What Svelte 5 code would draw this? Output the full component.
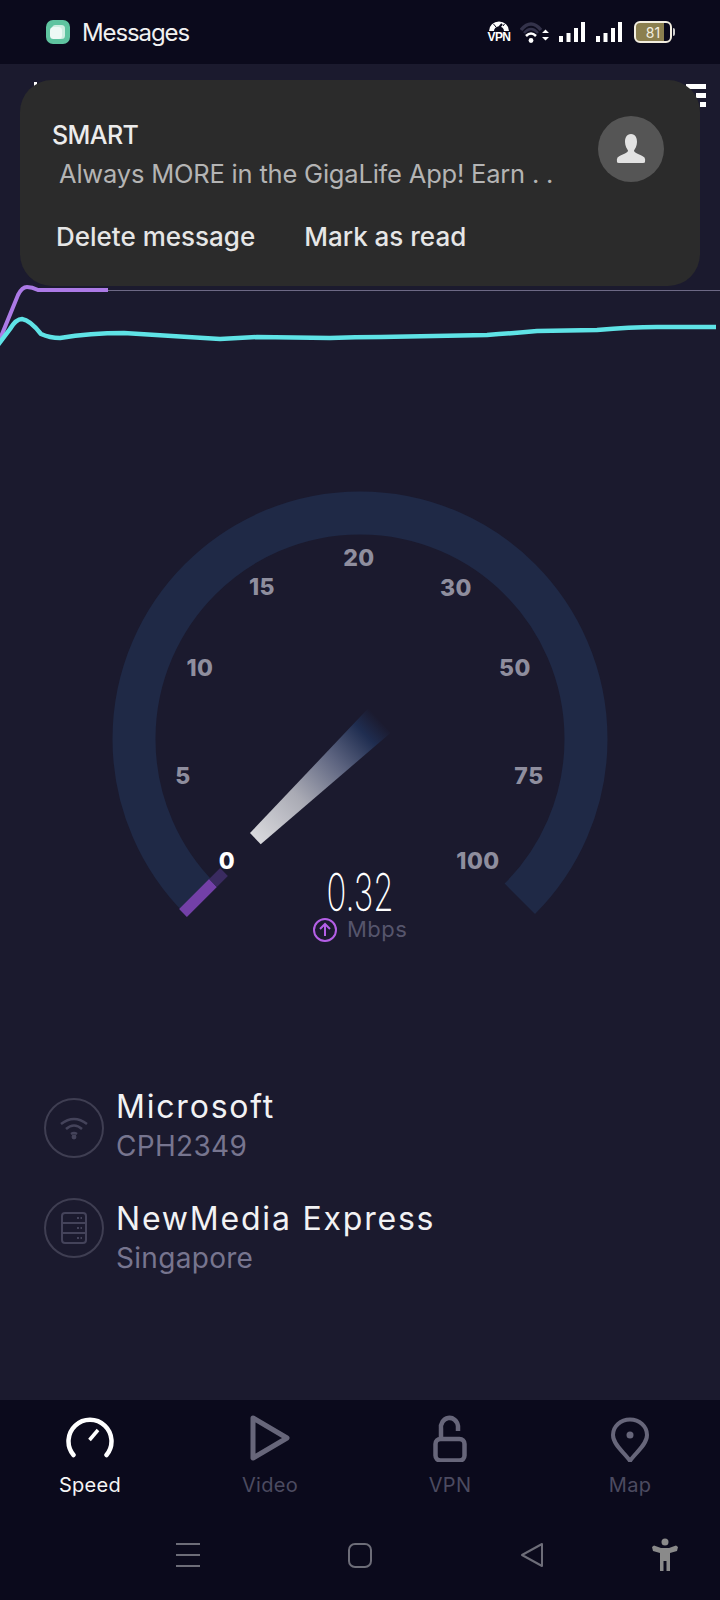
<script>
  const ticks = [
    { label: "20", x: 359, y: 566 },
    { label: "15", x: 262, y: 595 },
    { label: "30", x: 456, y: 596 },
    { label: "10", x: 200, y: 676 },
    { label: "50", x: 515, y: 676 },
    { label: "5", x: 183, y: 784 },
    { label: "75", x: 529, y: 784 },
    { label: "100", x: 478, y: 869 }
  ];

  const cyanLine =
    "M-2 345 L10 329 Q16 319 22 319 Q30 320 41 334 Q50 338 60 338 Q90 333 124 333 Q170 336 220 339 Q240 338 257 337 L330 338 Q355 337 381 337 L487 335 Q515 333 537 331 L597 330 Q630 327 657 327 L716 327";
</script>

<div class="phone">
  <header class="status">
    <div class="status-left">
      <svg class="app-icon" viewBox="0 0 24 24">
        <rect x="0" y="0" width="24" height="24" rx="7" fill="#5fc4a0" />
        <rect x="6" y="5" width="13" height="14" rx="3.5" fill="#cfeee2" />
        <rect x="4" y="7" width="12" height="12" rx="3.5" fill="#eef9f5" />
      </svg>
      <span>Messages</span>
    </div>
    <div class="status-right">
      <div class="vpn">
        <svg width="22" height="11" viewBox="0 0 22 11">
          <path d="M1 10 A10 9.500 0 0 1 21 10 L16 10 A5 4.500 0 0 0 6 10 Z" fill="#fff" />
          <path d="M9 9 L14 3" stroke="#0b0a1c" stroke-width="2" />
          <path d="M5.500 3 L8 6 M16.500 3 L15 5" stroke="#0b0a1c" stroke-width="1" />
        </svg>
        <span>VPN</span>
      </div>
      <svg class="wifi" width="30" height="21" viewBox="0 0 30 21">
        <path d="M1 8 Q11 -4 21 8" fill="none" stroke="#33324a" stroke-width="3.500" />
        <path d="M4 11 Q11 3 18 11" fill="none" stroke="#33324a" stroke-width="2.500" />
        <path d="M6 14 Q11 9 16 14" fill="none" stroke="#fff" stroke-width="2.500" />
        <circle cx="11" cy="18.500" r="2.400" fill="#fff" />
        <path d="M22 11 L25.500 7.500 L29 11 Z M22 15 L25.500 18.500 L29 15 Z" fill="#fff" />
      </svg>
      <svg class="signal" width="26" height="20" viewBox="0 0 26 20">
        <rect x="0" y="14" width="4" height="6" />
        <rect x="7.500" y="11" width="4" height="9" />
        <rect x="15" y="6" width="4" height="14" />
        <rect x="22" y="0" width="4" height="20" />
      </svg>
      <svg class="signal" width="26" height="20" viewBox="0 0 26 20">
        <rect x="0" y="14" width="4" height="6" />
        <rect x="7.500" y="11" width="4" height="9" />
        <rect x="15" y="6" width="4" height="14" />
        <rect x="22" y="0" width="4" height="20" />
      </svg>
      <div class="battery">
        <div class="battery-body"><span>81</span></div>
        <div class="battery-cap"></div>
      </div>
    </div>
  </header>

  <main class="content">
    <!-- bits of the app header poking out behind the notification -->
    <span class="peek-dot"></span>
    <div class="peek-menu"><i></i><i></i><i></i></div>

    <section class="notification">
      <div class="note-text">
        <div class="sender">SMART</div>
        <div class="preview">Always MORE in the GigaLife App! Earn . .</div>
      </div>
      <div class="avatar">
        <svg viewBox="0 0 32 32" width="32" height="32">
          <path d="M16 1 C11.500 1 10 5 10 9 C10 13 12 16 13 17.500 C13 20.500 7 21 2.500 24.500 Q1.500 26 2 29 Q2 30 4 30 L28 30 Q30 30 30 29 Q30.500 26 29.500 24.500 C25 21 19 20.500 19 17.500 C20 16 22 13 22 9 C22 5 20.500 1 16 1 Z" fill="#e2e2e2" />
        </svg>
      </div>
      <div class="actions">
        <span>Delete message</span>
        <span>Mark as read</span>
      </div>
    </section>

    <svg class="chart" viewBox="0 280 720 80" width="720" height="80">
      <line x1="108" y1="290.500" x2="720" y2="290.500" stroke="#6d6985" stroke-width="1" />
      <path d="M-2 344 L18 295 Q22 287 27 287 Q32 287 38 290 L108 290" fill="none" stroke="#ac7ae6" stroke-width="4" />
      <path d={cyanLine} fill="none" stroke="#5fe3e6" stroke-width="4.500" />
    </svg>

    <svg class="gauge" viewBox="0 480 720 480" width="720" height="480">
      <defs>
        <linearGradient id="needle" gradientUnits="userSpaceOnUse" x1="255" y1="839" x2="380" y2="720">
          <stop offset="0" stop-color="#d9d9dd" />
          <stop offset="0.35" stop-color="#a9aab4" />
          <stop offset="0.65" stop-color="#5d6480" />
          <stop offset="0.88" stop-color="#1f2d50" />
          <stop offset="1" stop-color="#1b1a2e" />
        </linearGradient>
      </defs>
      <path d="M200.200 898.800 A226 226 0 1 1 519.800 898.800" fill="none" stroke="#1f2946" stroke-width="43" />
      <path d="M183 913 L213 883" stroke="#7340a8" stroke-width="11" />
      <path d="M213 883 L224 872" stroke="#3a2b60" stroke-width="11" />
      <polygon points="250,833 260.700,844.300 390.700,732.700 368.300,708.300" fill="url(#needle)" />
      {#each ticks as tick}
        <text class="tick" x={tick.x} y={tick.y}>{tick.label}</text>
      {/each}
      <text class="tick zero" x="227" y="869">0</text>
      <text class="speed" x="360" y="911" textLength="67" lengthAdjust="spacingAndGlyphs">0.32</text>
      <circle cx="325" cy="930" r="11" fill="none" stroke="#b45fe6" stroke-width="2" />
      <path d="M325 936 L325 924 M320 929 L325 924 L330 929" fill="none" stroke="#b45fe6" stroke-width="2" />
      <text class="unit" x="347" y="937">Mbps</text>
    </svg>

    <section class="servers">
      <div class="server">
        <div class="round">
          <svg viewBox="0 0 30 24" width="30" height="24" fill="none" stroke="#44435a" stroke-width="2.500">
            <path d="M2 8 Q15 -2 28 8" />
            <path d="M7 13 Q15 6 23 13" />
            <path d="M12 18 Q15 16 18 18" />
            <circle cx="15" cy="21" r="1.200" fill="#44435a" />
          </svg>
        </div>
        <div>
          <div class="name">Microsoft</div>
          <div class="sub">CPH2349</div>
        </div>
      </div>
      <div class="server isp">
        <div class="round">
          <svg viewBox="0 0 26 32" width="26" height="32" fill="none" stroke="#44435a" stroke-width="2">
            <rect x="1" y="1" width="24" height="30" rx="3" />
            <path d="M1 11 H25 M1 21 H25" />
            <path d="M16 6 H21 M16 16 H21 M16 26 H21" stroke-dasharray="2 1.500" />
          </svg>
        </div>
        <div>
          <div class="name">NewMedia Express</div>
          <div class="sub">Singapore</div>
        </div>
      </div>
    </section>
  </main>

  <nav class="tabs">
    <div class="tab active">
      <svg viewBox="0 1 48 42" width="48" height="42" fill="none" stroke="#fff" stroke-width="4.500" stroke-linecap="round">
        <path d="M7.500 39 A21.500 21.500 0 1 1 40.500 39" />
        <path d="M23.500 24 L32 14" stroke-width="3.500" stroke-linecap="butt" />
      </svg>
      <span>Speed</span>
    </div>
    <div class="tab">
      <svg viewBox="0 0 40 46" width="40" height="46" fill="none" stroke="#67667a" stroke-width="5" stroke-linejoin="round">
        <path d="M3 3 L37 23 L3 43 Z" />
      </svg>
      <span>Video</span>
    </div>
    <div class="tab">
      <svg viewBox="0 -2 34 46" width="34" height="46" fill="none" stroke="#67667a" stroke-width="4.500">
        <rect x="2.500" y="22" width="29" height="21.500" rx="5" />
        <path d="M8 22 V12 A8.500 9.500 0 0 1 25 9 V14" />
      </svg>
      <span>VPN</span>
    </div>
    <div class="tab">
      <svg viewBox="0 -3 38 46" width="38" height="46" fill="none" stroke="#67667a" stroke-width="4">
        <path d="M19 43 C14 35 2 27 2 17 A17 15.500 0 0 1 36 17 C36 27 24 35 19 43 Z" />
        <circle cx="19" cy="17" r="3.500" fill="#67667a" stroke="none" />
      </svg>
      <span>Map</span>
    </div>
  </nav>

  <footer class="system-nav">
    <svg width="24" height="26" viewBox="0 0 24 26" stroke="#6d6d78" stroke-width="2">
      <path d="M0 2 H24 M0 13 H24 M0 24 H24" />
    </svg>
    <svg width="24" height="26" viewBox="0 0 24 26" fill="none" stroke="#6d6d78" stroke-width="2">
      <rect x="1" y="2" width="22" height="23" rx="6" />
    </svg>
    <svg width="24" height="26" viewBox="0 0 24 26" fill="none" stroke="#6d6d78" stroke-width="2" stroke-linejoin="round">
      <path d="M22 2 V24 L2 13 Z" />
    </svg>
    <svg width="26" height="34" viewBox="0 0 26 34" fill="#8a8a8a">
      <circle cx="13" cy="4" r="3.500" />
      <path d="M0 9 L2 7.500 L9 10 H17 L24 7.500 L26 9 L25 13 L18 15 V33 H14.500 V23 H11.500 V33 H8 V15 L1 13 Z" />
    </svg>
  </footer>
</div>

<style>
  :global(body) {
    margin: 0;
    background: #1b1a2e;
  }

  .phone {
    width: 720px;
    height: 1600px;
    display: flex;
    flex-direction: column;
    background: #1b1a2e;
    font-family: Inter, "Liberation Sans", sans-serif;
    overflow: hidden;
  }

  .status {
    height: 64px;
    flex: none;
    display: flex;
    justify-content: space-between;
    align-items: center;
    padding: 0 46px;
    background: #0b0a1c;
    color: #f1f1f1;
    box-sizing: border-box;
  }

  .status-left {
    display: flex;
    align-items: center;
    gap: 12px;
    font-size: 24px;
    letter-spacing: -1.1px;
  }

  .app-icon {
    width: 24px;
    height: 24px;
  }

  .status-right {
    display: flex;
    align-items: center;
    margin-right: -1px;
  }

  .status-right > svg {
    margin-left: 11px;
  }

  .status-right > svg.wifi {
    margin-left: 10px;
    margin-right: -2px;
  }

  .vpn {
    width: 22px;
    display: flex;
    flex-direction: column;
    align-items: center;
    color: #fff;
    font-family: "Liberation Sans", sans-serif;
    font-size: 12px;
    line-height: 11px;
    font-weight: 700;
    letter-spacing: -0.6px;
    white-space: nowrap;
  }

  .signal {
    fill: #fff;
  }

  .battery {
    display: flex;
    align-items: center;
    margin-left: 12px;
  }

  .battery-body {
    width: 34px;
    height: 18px;
    border: 2px solid #f3eee0;
    border-radius: 6px;
    background: linear-gradient(90deg, #8b7f4f 0 81%, transparent 81%);
    display: flex;
    align-items: center;
    justify-content: center;
    color: #f3eee0;
    font-size: 14px;
  }

  .battery-cap {
    width: 2px;
    height: 8px;
    margin-left: 1px;
    background: #cfcfcf;
    border-radius: 0 2px 2px 0;
  }

  .content {
    flex: 1;
    position: relative;
    display: flex;
    flex-direction: column;
    padding-top: 216px;
  }

  .peek-dot {
    position: absolute;
    left: 34px;
    top: 18px;
    width: 3px;
    height: 4px;
    background: #fff;
  }

  .peek-menu {
    position: absolute;
    right: 14px;
    top: 20px;
    display: flex;
    flex-direction: column;
    align-items: flex-end;
    gap: 4px;
  }

  .peek-menu i {
    display: block;
    height: 5px;
    background: #fff;
  }

  .peek-menu i:nth-child(1) {
    width: 20px;
  }

  .peek-menu i:nth-child(2) {
    width: 10px;
  }

  .peek-menu i:nth-child(3) {
    width: 6px;
  }

  .notification {
    position: absolute;
    left: 20px;
    top: 16px;
    width: 680px;
    height: 206px;
    box-sizing: border-box;
    background: #2b2b2b;
    border-radius: 32px;
    z-index: 2;
  }

  .note-text {
    position: absolute;
    left: 32px;
    top: 40px;
  }

  .sender {
    color: #ececec;
    font-size: 25px;
    line-height: 30px;
    font-weight: 500;
    letter-spacing: -0.6px;
  }

  .preview {
    margin: 9px 0 0 7px;
    color: #b4b4b4;
    font-size: 25.500px;
    line-height: 30px;
    letter-spacing: -0.2px;
    white-space: nowrap;
  }

  .avatar {
    position: absolute;
    left: 578px;
    top: 36px;
    width: 66px;
    height: 66px;
    border-radius: 50%;
    background: #555;
    display: flex;
    align-items: center;
    justify-content: center;
  }

  .actions {
    position: absolute;
    left: 36px;
    top: 140px;
    display: flex;
    gap: 49px;
    color: #e6e6e6;
    font-size: 26px;
    line-height: 34px;
    font-weight: 500;
    letter-spacing: 0;
  }

  .chart,
  .gauge {
    display: block;
    flex: none;
  }

  .gauge {
    margin-top: 120px;
  }

  .tick {
    fill: #8f8e9e;
    font-size: 23px;
    font-weight: 800;
    letter-spacing: 0.5px;
    text-anchor: middle;
  }

  .zero {
    fill: #fff;
  }

  .speed {
    fill: #fff;
    font-size: 52px;
    font-weight: 200;
    text-anchor: middle;
  }

  .unit {
    fill: #56556c;
    font-size: 22px;
    letter-spacing: 0.5px;
  }

  .servers {
    display: flex;
    flex-direction: column;
    gap: 36px;
    margin-top: 128px;
    padding-left: 44px;
  }

  .server {
    display: flex;
    align-items: flex-start;
    gap: 12px;
  }

  .round {
    width: 60px;
    height: 60px;
    margin-top: 10px;
    box-sizing: border-box;
    border: 2px solid #3f3e52;
    border-radius: 50%;
    display: flex;
    align-items: center;
    justify-content: center;
  }

  .isp .round {
    margin-top: -2px;
  }

  .name {
    color: #f2f2f4;
    font-size: 32px;
    line-height: 38px;
    letter-spacing: 1.8px;
  }

  .sub {
    margin-top: 2px;
    color: #77758f;
    font-size: 28px;
    line-height: 36px;
    letter-spacing: 0.3px;
  }

  .tabs {
    flex: none;
    display: grid;
    grid-template-columns: repeat(4, 1fr);
    height: 124px;
    background: #0b0a1c;
    padding-top: 14px;
    box-sizing: border-box;
  }

  .tab {
    display: flex;
    flex-direction: column;
    align-items: center;
    color: #4c4b60;
    font-size: 20px;
    letter-spacing: 0.3px;
  }

  .tab svg {
    height: 48px;
  }

  .tab span {
    margin-top: 11px;
    line-height: 24px;
  }

  .tab.active {
    color: #f5f5f5;
  }

  .system-nav {
    flex: none;
    height: 76px;
    box-sizing: border-box;
    display: grid;
    grid-template-columns: 172px 172px 172px 94px;
    justify-items: center;
    align-items: center;
    padding: 0 0 14px 102px;
    background: #0b0a1c;
  }
</style>
